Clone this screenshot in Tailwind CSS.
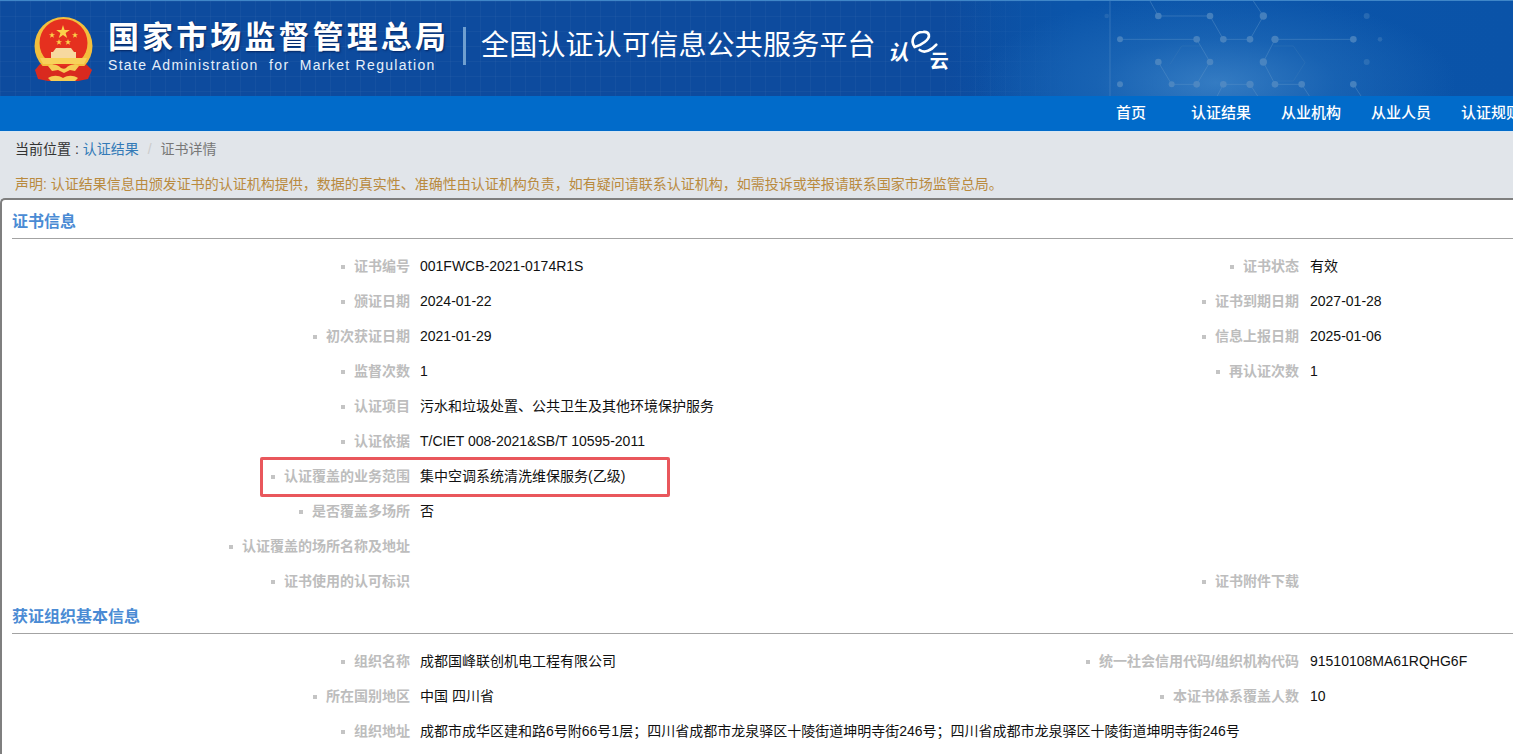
<!DOCTYPE html>
<html lang="zh-CN">
<head>
<meta charset="utf-8">
<script src="https://cdn.jsdelivr.net/npm/@tailwindcss/browser@4"></script>
</head>
<body class="h-screen overflow-hidden bg-[#e1e5ea] font-['Liberation_Sans','Noto_Sans_CJK_SC',sans-serif] text-[14px] text-[#111]">
<header class="relative h-[96px] border-t border-[#3f86c8] bg-[#0d4b9e] bg-[linear-gradient(rgba(255,255,255,0.03)_1px,transparent_1px),linear-gradient(90deg,rgba(255,255,255,0.03)_1px,transparent_1px),linear-gradient(90deg,#0d4b9e_0%,#0d4b9e_62%,#0b56aa_80%,#0a52a6_100%)] bg-[size:15px_15px,15px_15px,100%_100%] overflow-hidden flex items-start">
  <div class="absolute right-0 top-0 w-[560px] h-[96px] bg-[radial-gradient(ellipse_240px_90px_at_47%_85%,rgba(70,140,205,0.7)_0%,rgba(40,115,190,0.45)_50%,transparent_100%),linear-gradient(90deg,transparent_0%,#0b55aa_22%,#0a53a8_100%)]">
    <svg viewBox="0 0 1539 288" class="absolute right-0 top-0 w-[513px] h-[96px] opacity-70" fill="none" stroke="#5a92c8" stroke-width="2">
      <path d="M450 0L475 45H630L670 115H750L790 45L760 0M590 115H360M825 115H1060M590 115L630 183L590 250H515L475 183M825 115L790 183L825 250H905L930 288M670 250H750M650 288L670 250M750 250L775 288M1060 250L1085 288M330 0V288"/>
      <path d="M510 190L545 135H600M820 135H880L915 185L880 240H830" stroke="#3f7cb8" stroke-width="1.5"/>
      <g fill="#5a8fc4" stroke="none">
        <circle cx="475" cy="45" r="10"/><circle cx="630" cy="45" r="10"/><circle cx="790" cy="45" r="11"/><circle cx="670" cy="115" r="10"/><circle cx="750" cy="115" r="10"/><circle cx="590" cy="115" r="10"/><circle cx="360" cy="115" r="9"/><circle cx="825" cy="115" r="11"/><circle cx="1060" cy="115" r="10"/><circle cx="630" cy="183" r="10"/><circle cx="790" cy="183" r="11"/><circle cx="475" cy="183" r="10"/><circle cx="515" cy="250" r="9"/><circle cx="590" cy="250" r="10"/><circle cx="670" cy="250" r="10"/><circle cx="750" cy="250" r="11"/><circle cx="825" cy="250" r="10"/><circle cx="905" cy="250" r="10"/><circle cx="360" cy="250" r="9"/><circle cx="1060" cy="250" r="10"/><circle cx="1100" cy="45" r="9" opacity=".5"/><circle cx="1100" cy="183" r="9" opacity=".5"/><circle cx="1140" cy="115" r="7" opacity=".5"/><circle cx="320" cy="45" r="7" opacity=".4"/>
      </g>
    </svg>
  </div>
  <svg viewBox="0 0 70 72" class="relative shrink-0 ml-[30px] mt-[13px] w-[70px] h-[72px]">
    <path d="M10 50L5 56L8 65L18 67H48L58 65L62 56L56 50Z" fill="#d92a1f"/>
    <circle cx="33.5" cy="32" r="29" fill="#f3bf3d"/>
    <circle cx="33.5" cy="29" r="24" fill="#e5301f"/>
    <path d="M33 11l1.6 5h5.2l-4.2 3 1.6 5-4.2-3-4.2 3 1.6-5-4.2-3h5.2z" fill="#fbd24a"/>
    <path d="M22 18l.8 2.2h2.3l-1.9 1.4.7 2.2-1.9-1.4-1.9 1.4.7-2.2-1.9-1.4h2.3zM45 18l.8 2.2h2.3l-1.9 1.4.7 2.2-1.9-1.4-1.9 1.4.7-2.2-1.9-1.4h2.3zM29 25l.8 2.2h2.3l-1.9 1.4.7 2.2-1.9-1.4-1.9 1.4.7-2.2-1.9-1.4h2.3zM38 25l.8 2.2h2.3l-1.9 1.4.7 2.2-1.9-1.4-1.9 1.4.7-2.2-1.9-1.4h2.3z" fill="#fbd24a"/>
    <path d="M26 34h15l3 4H23zM21 38h25v6H21z" fill="#f7d9a0"/>
    <path d="M10 44H57L54 50H13Z" fill="#f8d25a"/>
    <path d="M12 52H55L57 62L48 67H19L10 62Z" fill="#d92a1f"/>
    <path d="M18 52c5-3 10-1 13 2 2 1 4 1 5 0 3-3 8-5 13-2l-4 5-5-1-6 3-6-3-6 1z" fill="#f6cd55"/>
    <path d="M18 64c5-3 10-3 15 0 5-3 10-3 15 0l-3 3H21z" fill="#f6cd55"/>
  </svg>
  <div class="relative ml-[8px] mt-[17px] text-white">
    <div class="text-[31px] leading-[40px] font-bold tracking-[3.1px] whitespace-nowrap [text-shadow:1px_1px_2px_rgba(0,20,70,0.7)]">国家市场监督管理总局</div>
    <div class="-mt-[2px] text-[14px] leading-[18px] tracking-[1.31px] whitespace-pre text-[#e6f0fa]">State Administration  for  Market Regulation</div>
  </div>
  <div class="relative ml-[14px] mt-[26px] w-[3px] h-[38px] bg-[#6f9fd0]"></div>
  <div class="relative ml-[15px] mt-[24px] text-[28px] leading-[42px] tracking-[0.2px] text-white whitespace-nowrap">全国认证认可信息公共服务平台</div>
  <div class="relative ml-[12px] mt-[27px] w-[64px] h-[44px] text-white">
    <span class="absolute left-0 top-[12px] text-[21px] leading-[26px] font-bold italic">认</span>
    <svg viewBox="0 0 216 162" class="absolute left-[-5px] top-[-6px] w-[72px] h-[54px]" fill="none" stroke="#fff" stroke-width="8" stroke-linecap="round"><path d="M95 75C80 55 95 30 120 30C140 28 145 45 125 60C115 68 105 72 95 75M110 84C125 95 145 85 160 68"/></svg>
    <span class="absolute left-[42px] top-[24px] text-[19px] leading-[20px] font-bold">云</span>
  </div>
</header>
<nav class="h-[35px] bg-[#016bca] flex justify-end overflow-hidden">
  <div class="flex items-center h-full text-[15px] font-medium text-white whitespace-nowrap w-[397px] shrink-0">
    <a class="w-[75px] shrink-0">首页</a>
    <a class="w-[90px] shrink-0">认证结果</a>
    <a class="w-[90px] shrink-0">从业机构</a>
    <a class="w-[90px] shrink-0">从业人员</a>
    <a class="shrink-0">认证规则</a>
  </div>
</nav>
<div class="h-[67px] border-t border-[#d8e7f3] px-[15px] pt-[7px]">
  <div class="leading-[20px] text-[#333]">当前位置 : <span class="text-[#337ab7]">认证结果</span><span class="mx-[9px] text-[#ccc]">/</span><span class="text-[#777]">证书详情</span></div>
  <div class="mt-[15px] leading-[20px] text-[14px] text-[#b98a3e] whitespace-nowrap">声明: 认证结果信息由颁发证书的认证机构提供，数据的真实性、准确性由认证机构负责，如有疑问请联系认证机构，如需投诉或举报请联系国家市场监管总局。</div>
</div>
<main class="h-[556px] overflow-hidden bg-white border-l-2 border-t-2 border-[#7f7f7f] rounded-tl-[5px] pl-[10px]">
  <section>
    <h2 class="h-[39px] pt-[5px] border-b border-[#a3a3a3] text-[16px] leading-[34px] font-bold text-[#4a8bd4]">证书信息</h2>
    <div class="pt-[10px] grid grid-cols-[398px_780px_110px_1fr] auto-rows-[35px] items-center">
      <div class="text-right font-bold text-[#bdbdbd] whitespace-nowrap"><span class="inline-block w-[4px] h-[4px] mr-[5px] bg-[#c4c4c4] align-middle"></span> 证书编号</div><div class="pl-[10px]">001FWCB-2021-0174R1S</div><div class="pr-[1px] text-right font-bold text-[#bdbdbd] whitespace-nowrap"><span class="inline-block w-[4px] h-[4px] mr-[5px] bg-[#c4c4c4] align-middle"></span> 证书状态</div><div class="pl-[10px]">有效</div>
      <div class="text-right font-bold text-[#bdbdbd] whitespace-nowrap"><span class="inline-block w-[4px] h-[4px] mr-[5px] bg-[#c4c4c4] align-middle"></span> 颁证日期</div><div class="pl-[10px]">2024-01-22</div><div class="pr-[1px] text-right font-bold text-[#bdbdbd] whitespace-nowrap"><span class="inline-block w-[4px] h-[4px] mr-[5px] bg-[#c4c4c4] align-middle"></span> 证书到期日期</div><div class="pl-[10px]">2027-01-28</div>
      <div class="text-right font-bold text-[#bdbdbd] whitespace-nowrap"><span class="inline-block w-[4px] h-[4px] mr-[5px] bg-[#c4c4c4] align-middle"></span> 初次获证日期</div><div class="pl-[10px]">2021-01-29</div><div class="pr-[1px] text-right font-bold text-[#bdbdbd] whitespace-nowrap"><span class="inline-block w-[4px] h-[4px] mr-[5px] bg-[#c4c4c4] align-middle"></span> 信息上报日期</div><div class="pl-[10px]">2025-01-06</div>
      <div class="text-right font-bold text-[#bdbdbd] whitespace-nowrap"><span class="inline-block w-[4px] h-[4px] mr-[5px] bg-[#c4c4c4] align-middle"></span> 监督次数</div><div class="pl-[10px]">1</div><div class="pr-[1px] text-right font-bold text-[#bdbdbd] whitespace-nowrap"><span class="inline-block w-[4px] h-[4px] mr-[5px] bg-[#c4c4c4] align-middle"></span> 再认证次数</div><div class="pl-[10px]">1</div>
      <div class="text-right font-bold text-[#bdbdbd] whitespace-nowrap"><span class="inline-block w-[4px] h-[4px] mr-[5px] bg-[#c4c4c4] align-middle"></span> 认证项目</div><div class="pl-[10px] col-span-3">污水和垃圾处置、公共卫生及其他环境保护服务</div>
      <div class="text-right font-bold text-[#bdbdbd] whitespace-nowrap"><span class="inline-block w-[4px] h-[4px] mr-[5px] bg-[#c4c4c4] align-middle"></span> 认证依据</div><div class="pl-[10px] col-span-3">T/CIET 008-2021&amp;SB/T 10595-2011</div>
      <div class="text-right font-bold text-[#bdbdbd] whitespace-nowrap"><span class="inline-block w-[4px] h-[4px] mr-[5px] bg-[#c4c4c4] align-middle"></span> 认证覆盖的业务范围</div><div class="pl-[10px] col-span-3 relative">集中空调系统清洗维保服务(乙级)<div class="absolute left-[-150px] top-[-9px] w-[410px] h-[40px] border-[3px] border-[#e9575c] rounded-[2px]"></div></div>
      <div class="text-right font-bold text-[#bdbdbd] whitespace-nowrap"><span class="inline-block w-[4px] h-[4px] mr-[5px] bg-[#c4c4c4] align-middle"></span> 是否覆盖多场所</div><div class="pl-[10px] col-span-3">否</div>
      <div class="text-right font-bold text-[#bdbdbd] whitespace-nowrap"><span class="inline-block w-[4px] h-[4px] mr-[5px] bg-[#c4c4c4] align-middle"></span> 认证覆盖的场所名称及地址</div><div class="col-span-3"></div>
      <div class="text-right font-bold text-[#bdbdbd] whitespace-nowrap"><span class="inline-block w-[4px] h-[4px] mr-[5px] bg-[#c4c4c4] align-middle"></span> 证书使用的认可标识</div><div></div><div class="pr-[1px] text-right font-bold text-[#bdbdbd] whitespace-nowrap"><span class="inline-block w-[4px] h-[4px] mr-[5px] bg-[#c4c4c4] align-middle"></span> 证书附件下载</div><div></div>
    </div>
  </section>
  <section>
    <h2 class="h-[35px] border-b border-[#a3a3a3] text-[16px] leading-[35px] font-bold text-[#4a8bd4]">获证组织基本信息</h2>
    <div class="pt-[10px] grid grid-cols-[398px_780px_110px_1fr] auto-rows-[35px] items-center">
      <div class="text-right font-bold text-[#bdbdbd] whitespace-nowrap"><span class="inline-block w-[4px] h-[4px] mr-[5px] bg-[#c4c4c4] align-middle"></span> 组织名称</div><div class="pl-[10px]">成都国峰联创机电工程有限公司</div><div class="pr-[1px] font-bold text-[#bdbdbd] whitespace-nowrap flex justify-end"><span><span class="inline-block w-[4px] h-[4px] mr-[5px] bg-[#c4c4c4] align-middle"></span> 统一社会信用代码/组织机构代码</span></div><div class="pl-[10px]">91510108MA61RQHG6F</div>
      <div class="text-right font-bold text-[#bdbdbd] whitespace-nowrap"><span class="inline-block w-[4px] h-[4px] mr-[5px] bg-[#c4c4c4] align-middle"></span> 所在国别地区</div><div class="pl-[10px]">中国 四川省</div><div class="pr-[1px] font-bold text-[#bdbdbd] whitespace-nowrap flex justify-end"><span><span class="inline-block w-[4px] h-[4px] mr-[5px] bg-[#c4c4c4] align-middle"></span> 本证书体系覆盖人数</span></div><div class="pl-[10px]">10</div>
      <div class="text-right font-bold text-[#bdbdbd] whitespace-nowrap"><span class="inline-block w-[4px] h-[4px] mr-[5px] bg-[#c4c4c4] align-middle"></span> 组织地址</div><div class="pl-[10px] col-span-3 whitespace-nowrap">成都市成华区建和路6号附66号1层；四川省成都市龙泉驿区十陵街道坤明寺街246号；四川省成都市龙泉驿区十陵街道坤明寺街246号</div>
    </div>
  </section>
</main>
</body>
</html>
